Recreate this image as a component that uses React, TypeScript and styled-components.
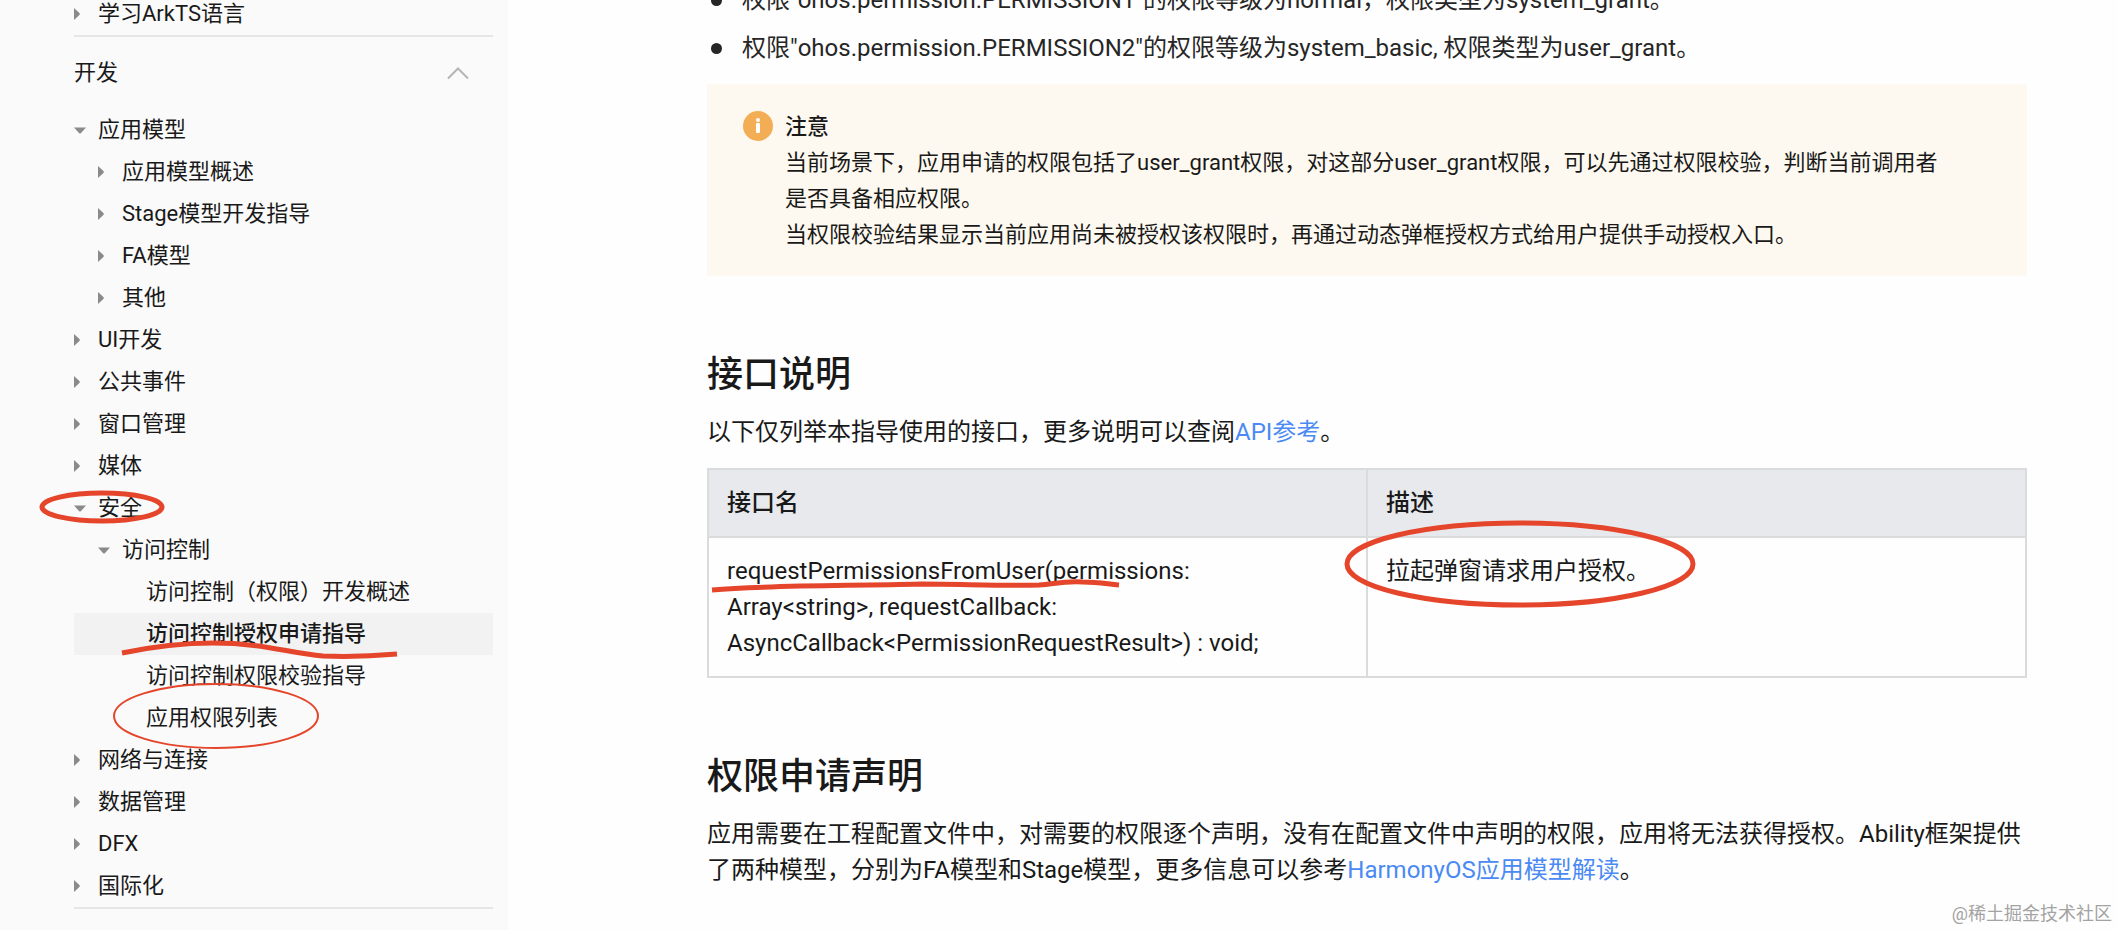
import React from "react";
import styled, { createGlobalStyle, css } from "styled-components";

const RED = "#e5452b";

const GlobalStyle = createGlobalStyle`
  * { box-sizing: border-box; }
  body {
    margin: 0;
    background: #fefefe;
    color: #191919;
    font-family: Roboto, "Noto Sans CJK SC", sans-serif;
    font-size: 24px;
    line-height: 36px;
  }
`;

const Page = styled.div`
  position: relative;
  display: flex;
  min-height: 100vh;
  overflow: hidden;
`;

const Sidebar = styled.nav`
  flex: none;
  width: 508px;
  padding: 0 15px 0 74px;
  background: #fafafa;
  font-size: 22px;
`;

const TreeList = styled.ul<{ $clipped?: boolean }>`
  margin: ${(p) => (p.$clipped ? "-7px 0 0" : "0")};
  padding: 0;
  list-style: none;
  border-bottom: 2px solid #e6e6e6;
`;

const TreeRow = styled.li<{ $level: number; $selected?: boolean }>`
  position: relative;
  display: flex;
  align-items: center;
  height: 42px;
  padding-left: ${(p) => p.$level * 24}px;
  background: ${(p) => (p.$selected ? "#f2f2f2" : "transparent")};
  font-weight: ${(p) => (p.$selected ? 500 : 400)};
`;

const TreeToggle = styled.button`
  display: flex;
  align-items: center;
  width: 24px;
  height: 24px;
  padding: 0;
  border: 0;
  background: none;
  cursor: pointer;
`;

const ToggleSpace = styled.span`
  width: 24px;
`;

const TreeLink = styled.a`
  color: inherit;
  text-decoration: none;
  white-space: nowrap;
`;

const SectionHeader = styled.button`
  display: flex;
  align-items: center;
  justify-content: space-between;
  width: 100%;
  height: 72px;
  padding: 0 24px 0 0;
  border: 0;
  background: none;
  color: inherit;
  font: inherit;
  cursor: pointer;
`;

const Mark = styled.svg<{ $thin?: boolean }>`
  position: absolute;
  left: 0;
  top: 0;
  overflow: visible;
  pointer-events: none;
  fill: none;
  stroke: ${RED};
  stroke-width: ${(p) => (p.$thin ? 2 : 5)};
  z-index: 1;
`;

const Main = styled.main`
  flex: 1;
  min-width: 0;
  padding: 0 91px 0 199px;
`;

const Bullets = styled.ul`
  display: flex;
  flex-direction: column;
  gap: 12px;
  margin: -18px 0 18px;
  padding: 0;
  list-style: none;
`;

const Bullet = styled.li`
  display: flex;
  align-items: center;
  color: #262626;
  &::before {
    content: "";
    flex: none;
    width: 11px;
    height: 11px;
    margin: 0 20px 0 4px;
    border-radius: 50%;
    background: #262626;
  }
`;

const Notice = styled.aside`
  display: flex;
  gap: 12px;
  padding: 25px 72px 23px 36px;
  background: #fef9f0;
  font-size: 22px;
`;

const NoticeIcon = styled.svg`
  flex: none;
  width: 30px;
  height: 30px;
  margin-top: 2px;
`;

const NoticeTitle = styled.div`
  font-weight: 500;
`;

const Paragraph = styled.p`
  margin: 0;
`;

const Heading = styled.h2`
  margin: 72px 0 12px;
  font-size: 36px;
  font-weight: 500;
  line-height: 54px;
`;

const Link = styled.a`
  color: #4a8af4;
  text-decoration: none;
`;

const Table = styled.table`
  width: 100%;
  margin-top: 18px;
  border-collapse: collapse;
  table-layout: fixed;
`;

const cell = css`
  position: relative;
  padding: 15px 18px;
  border: 2px solid #dadbdc;
  text-align: left;
  vertical-align: top;
`;

const HeadCell = styled.th`
  ${cell}
  background: #e8e9ec;
  font-weight: 500;
`;

const Cell = styled.td`
  ${cell}
`;

const Watermark = styled.div`
  position: absolute;
  right: 6px;
  bottom: 3px;
  color: #a3a3a3;
  font-size: 18px;
  line-height: 26px;
`;

type Node = {
  label: string;
  level: number;
  state?: "open" | "closed";
  mark?: "security" | "selected" | "list";
};

const intro: Node[] = [{ label: "学习ArkTS语言", level: 0, state: "closed" }];

const nodes: Node[] = [
  { label: "应用模型", level: 0, state: "open" },
  { label: "应用模型概述", level: 1, state: "closed" },
  { label: "Stage模型开发指导", level: 1, state: "closed" },
  { label: "FA模型", level: 1, state: "closed" },
  { label: "其他", level: 1, state: "closed" },
  { label: "UI开发", level: 0, state: "closed" },
  { label: "公共事件", level: 0, state: "closed" },
  { label: "窗口管理", level: 0, state: "closed" },
  { label: "媒体", level: 0, state: "closed" },
  { label: "安全", level: 0, state: "open", mark: "security" },
  { label: "访问控制", level: 1, state: "open" },
  { label: "访问控制（权限）开发概述", level: 2 },
  { label: "访问控制授权申请指导", level: 2, mark: "selected" },
  { label: "访问控制权限校验指导", level: 2 },
  { label: "应用权限列表", level: 2, mark: "list" },
  { label: "网络与连接", level: 0, state: "closed" },
  { label: "数据管理", level: 0, state: "closed" },
  { label: "DFX", level: 0, state: "closed" },
  { label: "国际化", level: 0, state: "closed" },
];

function Arrow({ open }: { open: boolean }) {
  return open ? (
    <svg width="12" height="7" viewBox="0 0 12 7" fill="#8a8a8a">
      <path d="M0 0.5H12L7 6Q6 7 5 6Z" />
    </svg>
  ) : (
    <svg width="6" height="12" viewBox="0 0 6 12" fill="#8a8a8a">
      <path d="M0 0L5.4 5Q6.2 6 5.4 7L0 12Z" />
    </svg>
  );
}

function NodeMark({ kind }: { kind: Node["mark"] }) {
  if (kind === "security")
    return (
      <Mark width="100" height="42">
        <ellipse cx="28" cy="20" rx="60" ry="14" />
      </Mark>
    );
  if (kind === "selected")
    return (
      <Mark width="330" height="42">
        <path d="M48 40C72 35 104 30 139 30C190 30 214 40 249 43C276 44 300 43 323 41" />
      </Mark>
    );
  return (
    <Mark $thin width="250" height="42">
      <ellipse cx="142" cy="19" rx="102" ry="32" />
    </Mark>
  );
}

function Tree({ items, clipped }: { items: Node[]; clipped?: boolean }) {
  return (
    <TreeList $clipped={clipped}>
      {items.map((n) => (
        <TreeRow key={n.label} $level={n.level} $selected={n.mark === "selected"}>
          {n.state ? (
            <TreeToggle aria-label={n.label} aria-expanded={n.state === "open"}>
              <Arrow open={n.state === "open"} />
            </TreeToggle>
          ) : (
            <ToggleSpace />
          )}
          <TreeLink href="#">{n.label}</TreeLink>
          {n.mark && <NodeMark kind={n.mark} />}
        </TreeRow>
      ))}
    </TreeList>
  );
}

export default function App() {
  return (
    <Page>
      <GlobalStyle />
      <Sidebar>
        <Tree items={intro} clipped />
        <SectionHeader aria-expanded="true">
          开发
          <svg width="22" height="14" viewBox="0 0 22 14" fill="none" stroke="#b5b5b5" strokeWidth="2">
            <path d="M1 12.5L11 2.5L21 12.5" />
          </svg>
        </SectionHeader>
        <Tree items={nodes} />
      </Sidebar>
      <Main>
        <Bullets>
          <Bullet>权限"ohos.permission.PERMISSION1"的权限等级为normal，权限类型为system_grant。</Bullet>
          <Bullet>权限"ohos.permission.PERMISSION2"的权限等级为system_basic, 权限类型为user_grant。</Bullet>
        </Bullets>
        <Notice>
          <NoticeIcon viewBox="0 0 30 30">
            <circle cx="15" cy="15" r="15" fill="#f3ae55" />
            <circle cx="15" cy="9" r="2" fill="#fff" />
            <rect x="13" y="12" width="4" height="10" rx="1" fill="#fff" />
          </NoticeIcon>
          <div>
            <NoticeTitle>注意</NoticeTitle>
            <Paragraph>
              当前场景下，应用申请的权限包括了user_grant权限，对这部分user_grant权限，可以先通过权限校验，判断当前调用者是否具备相应权限。
            </Paragraph>
            <Paragraph>
              当权限校验结果显示当前应用尚未被授权该权限时，再通过动态弹框授权方式给用户提供手动授权入口。
            </Paragraph>
          </div>
        </Notice>
        <Heading>接口说明</Heading>
        <Paragraph>
          以下仅列举本指导使用的接口，更多说明可以查阅<Link href="#">API参考</Link>。
        </Paragraph>
        <Table>
          <thead>
            <tr>
              <HeadCell>接口名</HeadCell>
              <HeadCell>描述</HeadCell>
            </tr>
          </thead>
          <tbody>
            <tr>
              <Cell>
                requestPermissionsFromUser(permissions:
                <br />
                Array&lt;string&gt;, requestCallback:
                <br />
                AsyncCallback&lt;PermissionRequestResult&gt;) : void;
                <Mark width="420" height="60">
                  <path d="M3 52C60 47 130 48 212 46C252 46 292 48 330 47C346 46 352 43 374 44C390 44 398 46 410 47" />
                </Mark>
              </Cell>
              <Cell>
                拉起弹窗请求用户授权。
                <Mark width="340" height="80">
                  <ellipse cx="152" cy="26" rx="173" ry="41" />
                </Mark>
              </Cell>
            </tr>
          </tbody>
        </Table>
        <Heading>权限申请声明</Heading>
        <Paragraph>
          应用需要在工程配置文件中，对需要的权限逐个声明，没有在配置文件中声明的权限，应用将无法获得授权。Ability框架提供了两种模型，分别为FA模型和Stage模型，更多信息可以参考
          <Link href="#">HarmonyOS应用模型解读</Link>。
        </Paragraph>
      </Main>
      <Watermark>@稀土掘金技术社区</Watermark>
    </Page>
  );
}
